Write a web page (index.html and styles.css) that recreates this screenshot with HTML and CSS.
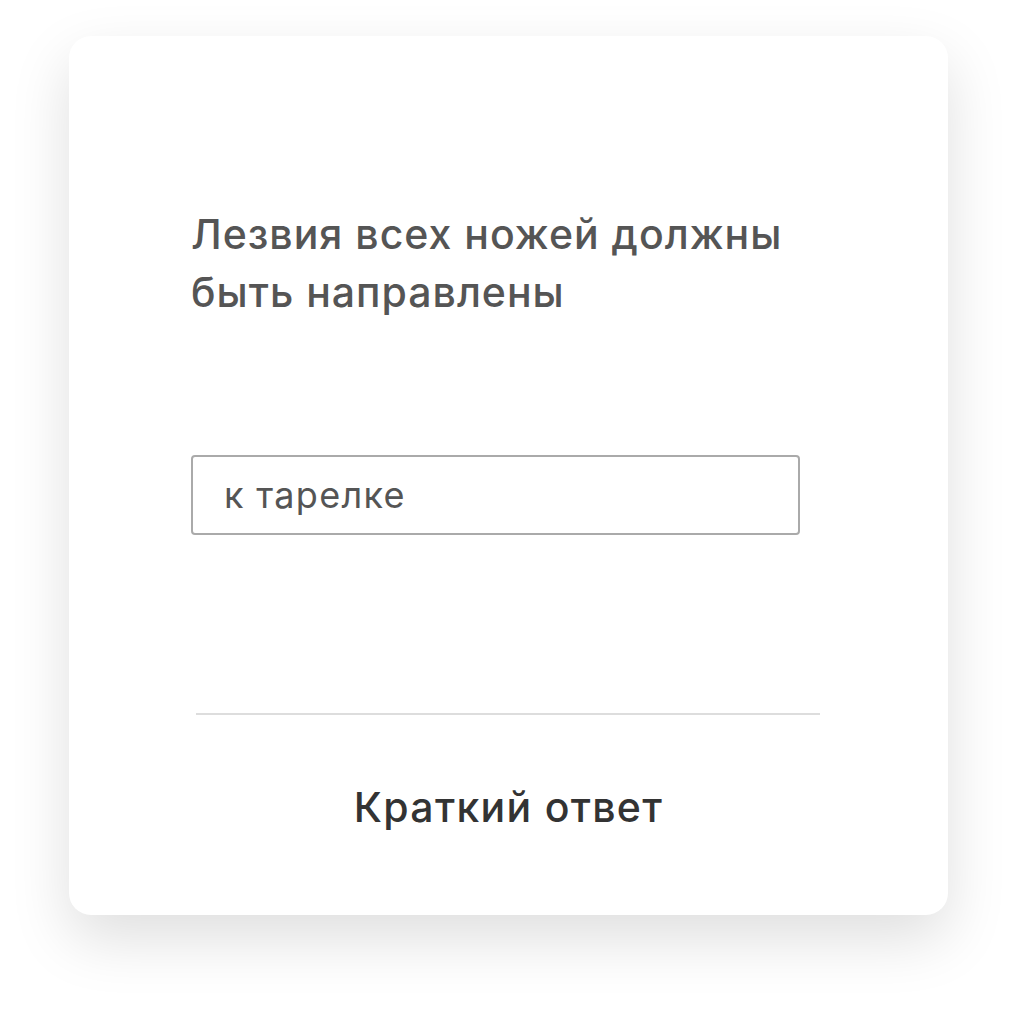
FILE: index.html
```html
<!DOCTYPE html>
<html lang="ru">
<head>
  <meta charset="UTF-8" />
  <title>Краткий ответ</title>
  <link rel="stylesheet" href="styles.css">
</head>
<body>
  <div class="card">
    <div class="body">
      <h2 class="question">Лезвия всех ножей должны быть направлены</h2>
      <div class="answer">к тарелке</div>
    </div>
    <div class="footer">
      <div class="divider"></div>
      <div class="type">Краткий ответ</div>
    </div>
  </div>
</body>
</html>
```

FILE: styles.css
```css
html, body {
  min-height: 100%;
}

body {
  margin: 0;
  padding: 36px 0 100px 69px;
  background-color: #ffffff;
  font-family: Inter, 'Noto Sans', sans-serif;
}

.card {
  box-sizing: border-box;
  width: 879px;
  height: 879px;
  background: white;
  border-radius: 22px;
  box-shadow: 0 24px 60px rgba(0,0,0,0.13);
  display: flex;
  flex-direction: column;
}

.body {
  padding: 169px 0 0 122px;
  flex: 1;
}

.question {
  margin: 0;
  width: 640px;
  font-size: 41px;
  font-weight: 500;
  line-height: 58px;
  letter-spacing: 1px;
  color: #555;
}

.answer {
  box-sizing: border-box;
  width: 609px;
  height: 80px;
  margin-top: 134px;
  padding-left: 31px;
  border: 2px solid #aaa;
  border-radius: 4px;
  display: flex;
  align-items: center;
  font-size: 36px;
  letter-spacing: 1.3px;
  color: #555;
}

.footer {
  padding-bottom: 83px;
}

.divider {
  width: 624px;
  height: 2px;
  margin-left: 127px;
  background: #ddd;
}

.type {
  margin-top: 67px;
  text-align: center;
  font-size: 41px;
  font-weight: 500;
  line-height: 50px;
  letter-spacing: 1.3px;
  color: #333;
}
```
